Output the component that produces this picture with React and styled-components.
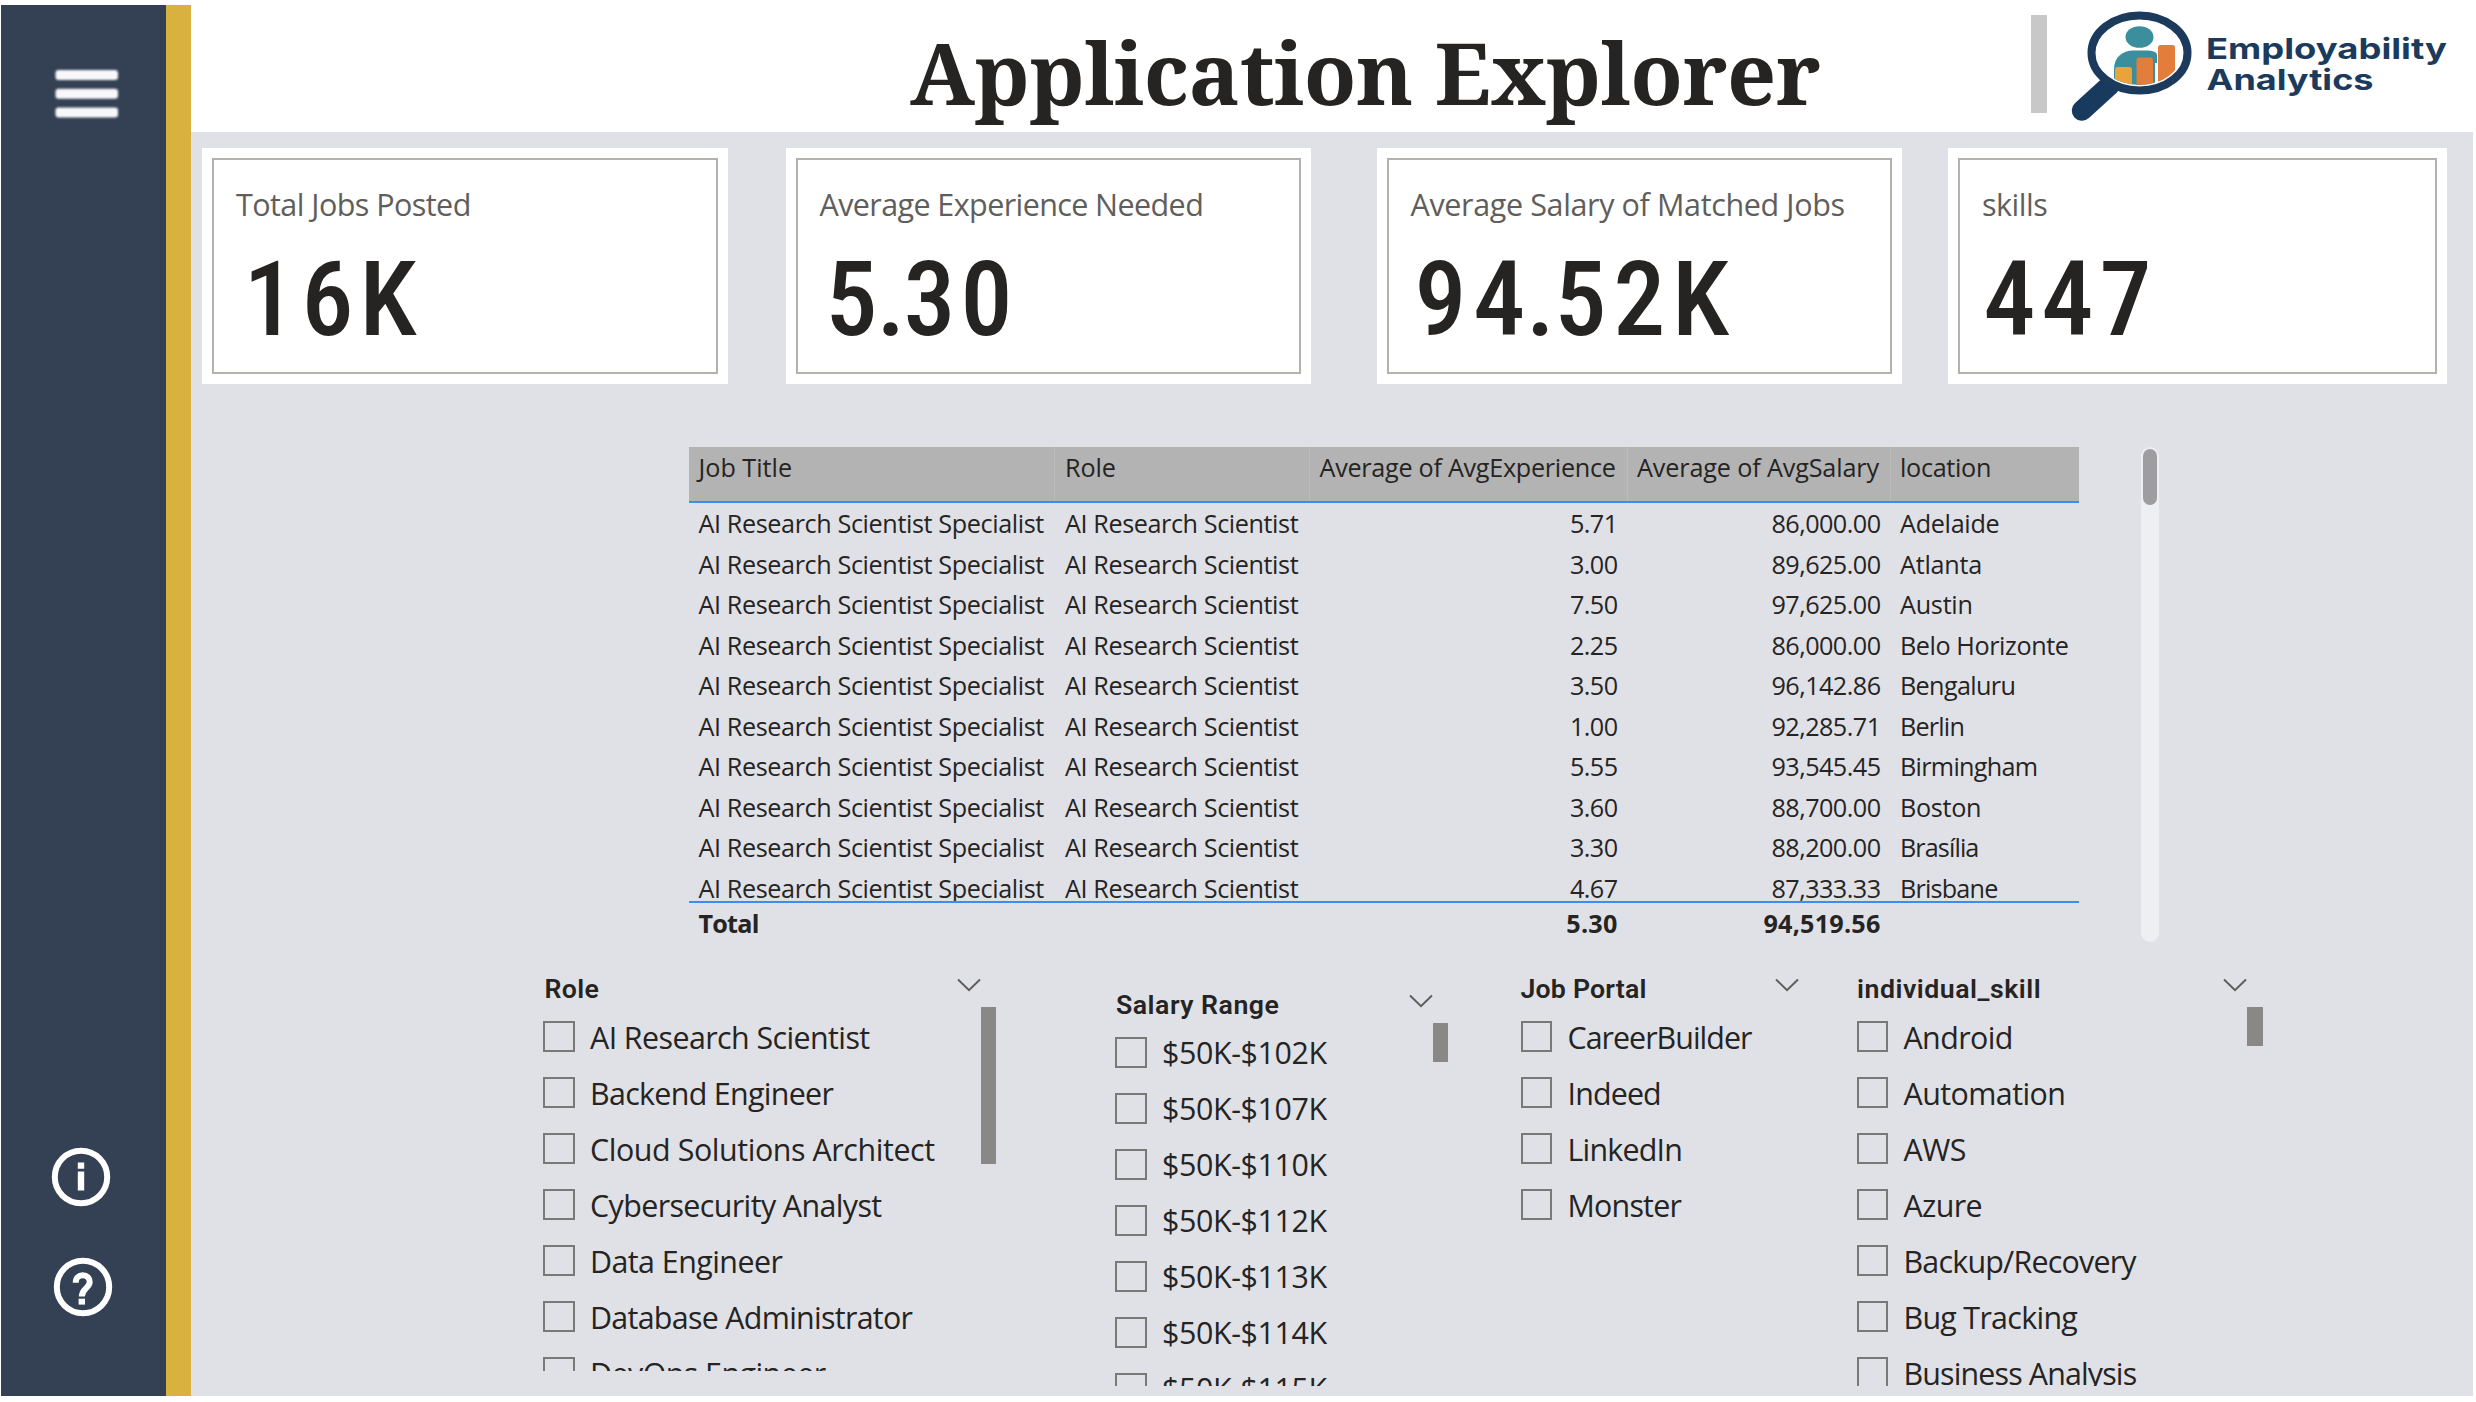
import React from "react";
import styled, { createGlobalStyle } from "styled-components";

const sans = `"Open Sans", "Noto Sans", sans-serif`;
const din = `"Roboto Condensed", Roboto, sans-serif`;

const GlobalStyle = createGlobalStyle`
  * { box-sizing: border-box; }
  html, body { margin: 0; background: #fff; }
  body { font-family: ${sans}; color: #252423; overflow: hidden; }
`;

const Page = styled.div`
  display: flex;
  width: 2476px;
  height: 1402px;
  padding: 5px 3px 6px 1px;
  background: #fff;
`;

const Sidebar = styled.aside`
  display: flex;
  flex-direction: column;
  flex: none;
  width: 190px;
  padding: 61px 0 79px 50px;
  background: #344054;
  border-right: 25px solid #d8b13f;
`;

const MenuIcon = styled.svg`
  width: 70px;
  height: 56px;
  filter: blur(0.9px);
`;

const RoundIcon = styled.svg`
  width: 60px;
  height: 60px;
  margin-top: ${(p) => p.$top};
  margin-left: ${(p) => p.$left}px;
`;

const Main = styled.main`
  flex: 1;
  display: flex;
  flex-direction: column;
  min-width: 0;
  background: #e0e1e7;
`;

const Header = styled.header`
  display: flex;
  flex: none;
  height: 127px;
  padding-left: 719px;
  background: #fff;
`;

const Title = styled.h1`
  width: 1121px;
  margin: 0;
  font: 700 86px/134px "Noto Serif", "Liberation Serif", serif;
  letter-spacing: -0.5px;
  white-space: nowrap;
`;

const Divider = styled.div`
  width: 16px;
  height: 98px;
  margin-top: 10px;
  background: #c8c8c8;
`;

const Logo = styled.svg`
  width: 410px;
  height: 125px;
  margin-left: 14px;
`;

const Cards = styled.section`
  display: grid;
  flex: none;
  grid-template-columns: 583.5px 591px 571.5px 499px;
  height: 252px;
  padding: 16px 26px 0 11px;
`;

const Card = styled.article`
  width: ${(p) => p.$width}px;
  height: 236px;
  padding: 10px;
  background: #fff;
`;

const CardFrame = styled.div`
  height: 100%;
  padding: 24px 0 0 22px;
  border: 2px solid #b3b3ae;
`;

const CardLabel = styled.div`
  font-size: 30.5px;
  line-height: 40px;
  color: #605e5c;
  white-space: nowrap;
  letter-spacing: ${(p) => p.$track}px;
`;

const CardValue = styled.div`
  margin-top: 26px;
  padding-left: ${(p) => p.$indent}px;
  font: 500 104px/100px ${din};
  letter-spacing: ${(p) => p.$track}px;
  white-space: nowrap;
`;

const Point = styled.span`
  margin: 0 -7px 0 -6px;
`;

const TableArea = styled.section`
  display: flex;
  flex: none;
  gap: 62px;
  margin: 63px 0 0 498px;
`;

const Table = styled.div`
  width: 1390px;
  height: 496px;
  font-size: 25.2px;
  letter-spacing: -0.39px;
  white-space: nowrap;
`;

const TableRow = styled.div`
  display: grid;
  grid-template-columns: 366px 255px 317.5px 263px 188.5px;
  line-height: 40.5px;
  height: 40.5px;
`;

const TableHead = styled(TableRow)`
  height: 56px;
  line-height: 40px;
  background: #b3b3b3;
  border-bottom: 2px solid #3f8af5;
`;

const TableBody = styled.div`
  height: 398px;
  overflow: hidden;
`;

const TableTotal = styled(TableRow)`
  height: 42px;
  line-height: 40px;
  border-top: 2px solid #3f8af5;
  font-weight: 700;
`;

const Cell = styled.div`
  padding: 0 10px 0 ${(p) => (p.$inset ? p.$inset : 9.5)}px;
  text-align: ${(p) => (p.$right ? "right" : "left")};
  letter-spacing: ${(p) => (p.$track !== undefined ? `${p.$track}px` : "inherit")};
`;

const HeadCell = styled(Cell)`
  padding-right: 11.5px;
  border-right: 1px solid ${(p) => (p.$last ? "transparent" : "#bcbcbd")};
`;

const TableScroll = styled.div`
  width: 18px;
  height: 495px;
  padding: 2px;
  border-radius: 9px;
  background: #eeeff3;
`;

const TableThumb = styled.div`
  height: 56px;
  border-radius: 7px;
  background: #9e9ea0;
`;

const Slicers = styled.section`
  display: flex;
  margin: 25.6px 0 0 352px;
`;

const Slicer = styled.div`
  flex: none;
  width: ${(p) => p.$width}px;
  margin-right: ${(p) => p.$gap}px;
  margin-top: ${(p) => p.$top}px;
`;

const SlicerHead = styled.div`
  display: flex;
  justify-content: space-between;
  height: 38.4px;
  padding: 0 15.5px 0 ${(p) => p.$indent}px;
  font: 600 26.7px/40px Roboto, sans-serif;
  letter-spacing: ${(p) => p.$track}px;
`;

const Chevron = styled.svg`
  width: 24px;
  height: 14px;
  margin-top: 9px;
`;

const SlicerBody = styled.div`
  display: flex;
  justify-content: space-between;
  height: ${(p) => p.$height}px;
  overflow: hidden;
`;

const OptionList = styled.div`
  padding-top: 1.3px;
`;

const Option = styled.label`
  display: flex;
  align-items: center;
  gap: 15.5px;
  height: 56px;
  font-size: 30.4px;
  line-height: 52px;
  white-space: nowrap;
`;

const Box = styled.span`
  flex: none;
  width: 31.5px;
  height: 31.5px;
  border: 2px solid #7b7978;
`;

const OptionText = styled.span`
  padding-top: ${(p) => p.$drop}px;
  letter-spacing: ${(p) => p.$track}px;
`;

const SlicerThumb = styled.div`
  width: 15.5px;
  height: ${(p) => p.$height}px;
  background: #8a8886;
`;

const cards = [
  { label: "Total Jobs Posted", value: "16K", width: 525.5, track: -0.55, indent: 7.5, valueTrack: 6 },
  { label: "Average Experience Needed", value: "5.30", width: 525.5, track: -0.6, indent: 6, valueTrack: 5 },
  { label: "Average Salary of Matched Jobs", value: "94.52K", width: 525.5, track: -0.37, indent: 4, valueTrack: 6.7 },
  { label: "skills", value: "447", width: 499, track: -0.5, indent: 1.5, valueTrack: 6 },
];

const rows = [
  ["5.71", "86,000.00", "Adelaide", -0.3],
  ["3.00", "89,625.00", "Atlanta", -0.25],
  ["7.50", "97,625.00", "Austin", -0.25],
  ["2.25", "86,000.00", "Belo Horizonte", -0.42],
  ["3.50", "96,142.86", "Bengaluru", -0.65],
  ["1.00", "92,285.71", "Berlin", -0.8],
  ["5.55", "93,545.45", "Birmingham", -0.7],
  ["3.60", "88,700.00", "Boston", -0.3],
  ["3.30", "88,200.00", "Brasília", -0.9],
  ["4.67", "87,333.33", "Brisbane", -0.8],
];

const slicers = [
  {
    title: "Role", width: 453, gap: 119, top: 0, height: 363.7, indent: 1.5, track: 0.3, drop: 3, thumb: 157,
    options: [
      ["AI Research Scientist", -0.58],
      ["Backend Engineer", -0.68],
      ["Cloud Solutions Architect", -0.42],
      ["Cybersecurity Analyst", -0.6],
      ["Data Engineer", -0.55],
      ["Database Administrator", -0.7],
      ["DevOps Engineer", -0.55],
    ],
  },
  {
    title: "Salary Range", width: 333, gap: 72.5, top: 16, height: 363, indent: 1, track: 0.5, drop: 1.5, thumb: 39,
    options: [
      ["$50K-$102K", -0.4],
      ["$50K-$107K", -0.4],
      ["$50K-$110K", -0.4],
      ["$50K-$112K", -0.4],
      ["$50K-$113K", -0.4],
      ["$50K-$114K", -0.4],
      ["$50K-$115K", -0.4],
    ],
  },
  {
    title: "Job Portal", width: 294, gap: 42, top: 0, height: 363, indent: 0, track: 0.2, drop: 3,
    options: [
      ["CareerBuilder", -0.98],
      ["Indeed", -0.85],
      ["LinkedIn", -0.78],
      ["Monster", -0.78],
    ],
  },
  {
    title: "individual_skill", width: 406, gap: 0, top: 0, height: 379, indent: 0.5, track: 0.52, drop: 3, thumb: 39,
    options: [
      ["Android", -0.6],
      ["Automation", -0.55],
      ["AWS", -0.5],
      ["Azure", -0.6],
      ["Backup/Recovery", -0.78],
      ["Bug Tracking", -0.7],
      ["Business Analysis", -0.85],
    ],
  },
];

function Value({ text }) {
  const [whole, decimals] = text.split(".");
  return (
    <>
      {whole}
      {decimals && <Point>.</Point>}
      {decimals}
    </>
  );
}

function BrandLogo() {
  return (
    <Logo viewBox="0 0 410 125">
      <defs>
        <clipPath id="lens">
          <ellipse cx="78.5" cy="48" rx="42" ry="32" />
        </clipPath>
      </defs>
      <path d="M49 80 L21 105.5" stroke="#173a5e" strokeWidth="20.5" strokeLinecap="round" />
      <ellipse cx="78.5" cy="48" rx="48" ry="37.5" fill="#fff" stroke="#1b3a5c" strokeWidth="8" />
      <g clipPath="url(#lens)">
        <ellipse cx="78.5" cy="32" rx="14" ry="10.8" fill="#3b8e9b" />
        <path d="M53 82 V64 C53 52 62 45.6 72 45.6 H84 C93 45.6 96 47.5 96 50 V58 H94 V82 Z" fill="#3b8e9b" />
        <rect x="54" y="62" width="17" height="30" rx="2.5" fill="#eaa33a" />
        <rect x="75.5" y="52.5" width="16.5" height="40" rx="3" fill="#e37d3c" />
        <rect x="97" y="40" width="17" height="50" rx="2.5" fill="#e37d3c" />
      </g>
      <g fill="#1b3a5c" fontFamily="Inter, sans-serif" fontWeight="700" fontSize="29">
        <text x="145" y="54" textLength="241" lengthAdjust="spacingAndGlyphs">Employability</text>
        <text x="145.5" y="85.3" textLength="167" lengthAdjust="spacingAndGlyphs">Analytics</text>
      </g>
    </Logo>
  );
}

export default function App() {
  return (
    <Page>
      <GlobalStyle />
      <Sidebar>
        <MenuIcon viewBox="0 0 70 56" fill="#f8f8fa">
          <rect x="4.5" y="4" width="62.5" height="10" rx="3" />
          <rect x="4.5" y="22.8" width="62.5" height="10" rx="3" />
          <rect x="4.5" y="41.5" width="62.5" height="10" rx="3" />
        </MenuIcon>
        <RoundIcon viewBox="-30 -30 60 60" $top="auto" $left={-0.5}>
          <circle r="26.2" fill="none" stroke="#fff" strokeWidth="6" />
          <path d="M-3.2 -14.5h6.4v6.2h-6.4z M-3.2 -5.5h6.4v19h-6.4z" fill="#fff" />
        </RoundIcon>
        <RoundIcon viewBox="-30 -30 60 60" $top="50px" $left={1.5}>
          <circle r="26.2" fill="none" stroke="#fff" strokeWidth="6" />
          <path
            d="M-7.3 -4.3 C-7.3 -9 -4 -11.7 -0.3 -11.7 C4 -11.7 6.7 -8.8 6.7 -5 C6.7 1 -1.2 1.5 -1.2 9.5"
            fill="none"
            stroke="#fff"
            strokeWidth="6"
          />
          <path d="M-4.4 11.7h6.4v5.9h-6.4z" fill="#fff" />
        </RoundIcon>
      </Sidebar>
      <Main>
        <Header>
          <Title>Application Explorer</Title>
          <Divider />
          <BrandLogo />
        </Header>
        <Cards>
          {cards.map((c) => (
            <Card key={c.label} $width={c.width}>
              <CardFrame>
                <CardLabel $track={c.track}>{c.label}</CardLabel>
                <CardValue $indent={c.indent} $track={c.valueTrack}>
                  <Value text={c.value} />
                </CardValue>
              </CardFrame>
            </Card>
          ))}
        </Cards>
        <TableArea>
          <Table>
            <TableHead>
              <HeadCell $track={0}>Job Title</HeadCell>
              <HeadCell $inset={10} $track={-0.1}>Role</HeadCell>
              <HeadCell $right $track={-0.28}>Average of AvgExperience</HeadCell>
              <HeadCell $right $track={-0.14}>Average of AvgSalary</HeadCell>
              <HeadCell $last $track={-0.3}>location</HeadCell>
            </TableHead>
            <TableBody>
              {rows.map(([experience, salary, location, track]) => (
                <TableRow key={location}>
                  <Cell>AI Research Scientist Specialist</Cell>
                  <Cell $inset={10} $track={-0.41}>AI Research Scientist</Cell>
                  <Cell $right $track={-0.55}>{experience}</Cell>
                  <Cell $right $track={-0.55}>{salary}</Cell>
                  <Cell $track={track}>{location}</Cell>
                </TableRow>
              ))}
            </TableBody>
            <TableTotal>
              <Cell $track={-0.8}>Total</Cell>
              <Cell />
              <Cell $right $track={0.2}>5.30</Cell>
              <Cell $right $track={0.2}>94,519.56</Cell>
              <Cell />
            </TableTotal>
          </Table>
          <TableScroll>
            <TableThumb />
          </TableScroll>
        </TableArea>
        <Slicers>
          {slicers.map((s) => (
            <Slicer key={s.title} $width={s.width} $gap={s.gap} $top={s.top}>
              <SlicerHead $indent={s.indent} $track={s.track}>
                {s.title}
                <Chevron viewBox="0 0 24 14">
                  <path d="M1 1.5 L12 12.2 L23 1.5" fill="none" stroke="#605e5c" strokeWidth="2" />
                </Chevron>
              </SlicerHead>
              <SlicerBody $height={s.height}>
                <OptionList>
                  {s.options.map(([name, track]) => (
                    <Option key={name}>
                      <Box />
                      <OptionText $drop={s.drop} $track={track}>{name}</OptionText>
                    </Option>
                  ))}
                </OptionList>
                {s.thumb && <SlicerThumb $height={s.thumb} />}
              </SlicerBody>
            </Slicer>
          ))}
        </Slicers>
      </Main>
    </Page>
  );
}
